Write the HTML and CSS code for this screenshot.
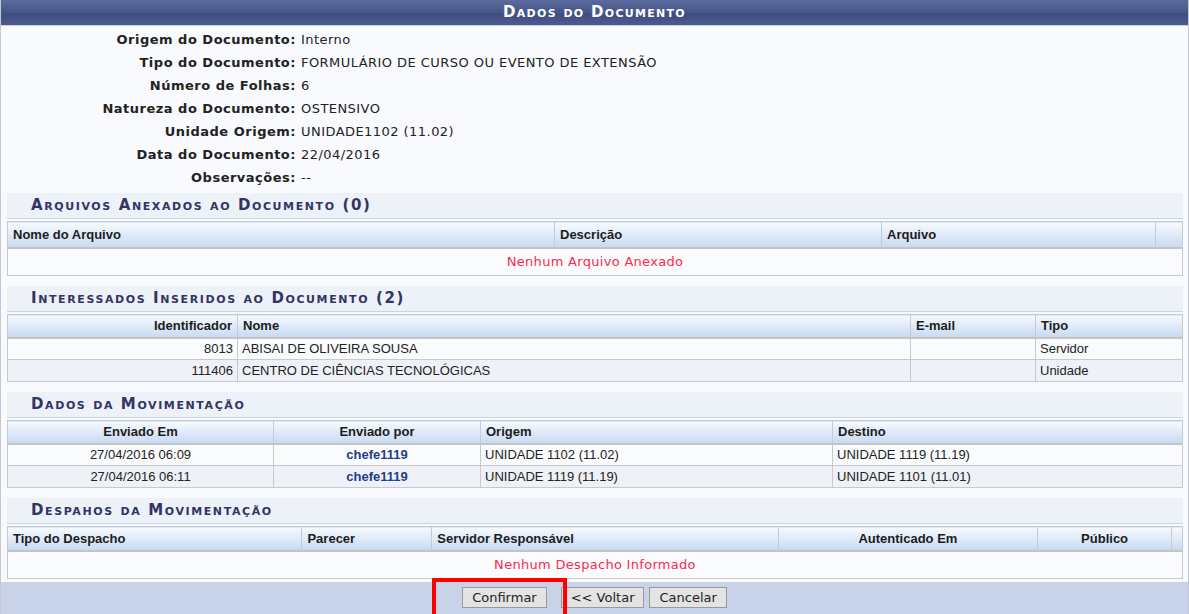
FILE: index.html
```html
<!DOCTYPE html>
<html lang="pt-BR">
<head>
    <meta charset="UTF-8">
    <title>Dados do Documento</title>
    <link rel="stylesheet" href="styles.css">
</head>
<body>
    <div class="formulario">
        <h2 class="titulo">Dados do Documento</h2>

        <dl class="detalhes">
            <dt>Origem do Documento:</dt><dd>Interno</dd>
            <dt>Tipo do Documento:</dt><dd>FORMULÁRIO DE CURSO OU EVENTO DE EXTENSÃO</dd>
            <dt>Número de Folhas:</dt><dd>6</dd>
            <dt>Natureza do Documento:</dt><dd>OSTENSIVO</dd>
            <dt>Unidade Origem:</dt><dd>UNIDADE1102 (11.02)</dd>
            <dt>Data do Documento:</dt><dd>22/04/2016</dd>
            <dt>Observações:</dt><dd>--</dd>
        </dl>

        <div class="subformulario arquivos">
            <h3 class="subtitulo">Arquivos Anexados ao Documento (0)</h3>
            <table class="listagem">
                <tr>
                    <th style="width: 547px;">Nome do Arquivo</th>
                    <th style="width: 327px;">Descrição</th>
                    <th style="width: 274px;">Arquivo</th>
                    <th></th>
                </tr>
                <tr>
                    <td colspan="4" class="vazio">Nenhum Arquivo Anexado</td>
                </tr>
            </table>
        </div>

        <div class="subformulario">
            <h3 class="subtitulo">Interessados Inseridos ao Documento (2)</h3>
            <table class="listagem">
                <tr>
                    <th class="direita" style="width: 230px;">Identificador</th>
                    <th style="width: 673px;">Nome</th>
                    <th style="width: 125px;">E-mail</th>
                    <th>Tipo</th>
                </tr>
                <tr>
                    <td class="direita">8013</td>
                    <td>ABISAI DE OLIVEIRA SOUSA</td>
                    <td></td>
                    <td>Servidor</td>
                </tr>
                <tr class="par">
                    <td class="direita">111406</td>
                    <td>CENTRO DE CIÊNCIAS TECNOLÓGICAS</td>
                    <td></td>
                    <td>Unidade</td>
                </tr>
            </table>
        </div>

        <div class="subformulario">
            <h3 class="subtitulo">Dados da Movimentação</h3>
            <table class="listagem">
                <tr>
                    <th class="centro" style="width: 266px;">Enviado Em</th>
                    <th class="centro" style="width: 207px;">Enviado por</th>
                    <th style="width: 352px;">Origem</th>
                    <th>Destino</th>
                </tr>
                <tr>
                    <td class="centro">27/04/2016 06:09</td>
                    <td class="centro"><a href="#">chefe1119</a></td>
                    <td>UNIDADE 1102 (11.02)</td>
                    <td>UNIDADE 1119 (11.19)</td>
                </tr>
                <tr class="par">
                    <td class="centro">27/04/2016 06:11</td>
                    <td class="centro"><a href="#">chefe1119</a></td>
                    <td>UNIDADE 1119 (11.19)</td>
                    <td>UNIDADE 1101 (11.01)</td>
                </tr>
            </table>
        </div>

        <div class="subformulario despachos">
            <h3 class="subtitulo">Despahos da Movimentação</h3>
            <table class="listagem">
                <tr>
                    <th style="width: 295px;">Tipo do Despacho</th>
                    <th style="width: 130px;">Parecer</th>
                    <th style="width: 347px;">Servidor Responsável</th>
                    <th class="centro" style="width: 260px;">Autenticado Em</th>
                    <th class="centro" style="width: 134px;">Público</th>
                    <th></th>
                </tr>
                <tr>
                    <td colspan="6" class="vazio">Nenhum Despacho Informado</td>
                </tr>
            </table>
        </div>

        <div class="rodape">
            <button class="destaque">Confirmar</button>
            <button class="voltar">&lt;&lt; Voltar</button>
            <button>Cancelar</button>
        </div>
    </div>
</body>
</html>
```

FILE: styles.css
```css
body {
    margin: 0;
    background: #ffffff;
    font-family: "DejaVu Sans", Verdana, sans-serif;
    font-size: 13px;
    color: #222222;
}

.formulario {
    width: 1187px;
    border: 1px solid #c4c8d0;
    border-top: none;
    background: #f9fafd;
}

.titulo {
    margin: 0;
    height: 25px;
    line-height: 25px;
    text-align: center;
    color: #ffffff;
    font-size: 15px;
    font-weight: bold;
    font-variant: small-caps;
    letter-spacing: 1.3px;
    background: linear-gradient(#5b6b9b, #46558a 50%, #3f4c7e 55%, #4d5c90);
    border-bottom: 1px solid #c6cde0;
}

.detalhes {
    display: grid;
    grid-template-columns: 295px auto;
    column-gap: 5px;
    margin: 2px 0 4px 0;
}

.detalhes dt {
    text-align: right;
    font-weight: bold;
    letter-spacing: 0.5px;
    line-height: 23px;
}

.detalhes dd {
    margin: 0;
    line-height: 23px;
    letter-spacing: 0.45px;
}

.subformulario {
    margin: 0 5px 10px 6px;
}

.subformulario.arquivos th {
    height: 26px;
}

.subformulario.despachos {
    margin-bottom: 9px;
}

.subformulario.despachos th {
    height: 24px;
}

.subtitulo {
    margin: 0 0 2px 0;
    height: 25px;
    line-height: 25px;
    padding-left: 24px;
    font-size: 15px;
    font-weight: bold;
    font-variant: small-caps;
    letter-spacing: 1.6px;
    color: #333366;
    background: #edf1f8;
    border-bottom: 1px solid #c5d6ec;
}

.listagem {
    width: 100%;
    border-collapse: collapse;
    font-family: "Liberation Sans", Arial, sans-serif;
    font-size: 13px;
    border: 1px solid #c9c9c9;
}

.listagem th,
.listagem td {
    box-sizing: border-box;
}

.listagem th {
    height: 23px;
    padding: 0 5px;
    text-align: left;
    font-weight: bold;
    color: #1c1c1c;
    background: linear-gradient(#f7faff, #c7d9f2);
    border-left: 1px solid #c4cbd6;
    border-bottom: 2px solid #c4c4c4;
}

.listagem td {
    height: 22px;
    padding: 0 4px;
    background: #fafbfd;
    border: 1px solid #c9c9c9;
}

.listagem tr.par td {
    background: #eef1f7;
}

.listagem .direita {
    text-align: right;
}

.listagem .centro {
    text-align: center;
}

.listagem a {
    color: #213e88;
    font-weight: bold;
    text-decoration: none;
}

.listagem td.vazio {
    height: 28px;
    text-align: center;
    color: #fb2a4c;
    font-family: "DejaVu Sans", Verdana, sans-serif;
    letter-spacing: 0.3px;
}

.rodape {
    height: 36px;
    margin-top: -6px;
    display: flex;
    justify-content: center;
    align-items: flex-start;
    gap: 5px;
    padding-top: 5px;
    box-sizing: border-box;
    background: #c8d3e9;
}

.rodape button {
    font-family: "DejaVu Sans", Verdana, sans-serif;
    font-size: 13px;
    color: #222222;
    height: 21px;
    padding: 0 9px;
    background: #e3e3e3;
    border: 1px solid #9a9a9a;
    border-radius: 0;
}

.rodape .voltar {
    margin-left: 9px;
}

.destaque {
    position: relative;
}

.destaque::after {
    content: "";
    position: absolute;
    left: -31px;
    top: -10px;
    right: -21px;
    bottom: -12px;
    border: 4px solid #ff0000;
}
```
